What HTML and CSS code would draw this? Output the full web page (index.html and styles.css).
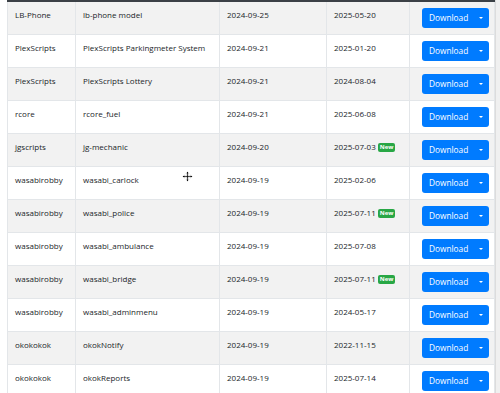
FILE: index.html
```html
<!DOCTYPE html>
<html>
<head>
<meta charset="utf-8">
<link rel="stylesheet" href="styles.css">
</head>
<body>
<div class="page">
  <div class="gutter"></div>
  <table class="list">
    <colgroup>
      <col class="c1"><col class="c2"><col class="c3"><col class="c4"><col class="c5">
    </colgroup>
    <tbody>
      <tr><td>LB-Phone</td><td>lb-phone model</td><td>2024-09-25</td><td>2025-05-20</td><td class="act"><div class="btn-group"><span class="btn-main">Download</span><span class="btn-toggle"><span class="caret"></span></span></div></td></tr>
      <tr><td>PlexScripts</td><td>PlexScripts Parkingmeter System</td><td>2024-09-21</td><td>2025-01-20</td><td class="act"><div class="btn-group"><span class="btn-main">Download</span><span class="btn-toggle"><span class="caret"></span></span></div></td></tr>
      <tr><td>PlexScripts</td><td>PlexScripts Lottery</td><td>2024-09-21</td><td>2024-08-04</td><td class="act"><div class="btn-group"><span class="btn-main">Download</span><span class="btn-toggle"><span class="caret"></span></span></div></td></tr>
      <tr><td>rcore</td><td>rcore_fuel</td><td>2024-09-21</td><td>2025-06-08</td><td class="act"><div class="btn-group"><span class="btn-main">Download</span><span class="btn-toggle"><span class="caret"></span></span></div></td></tr>
      <tr><td>jgscripts</td><td>jg-mechanic</td><td>2024-09-20</td><td>2025-07-03 <span class="badge">New</span></td><td class="act"><div class="btn-group"><span class="btn-main">Download</span><span class="btn-toggle"><span class="caret"></span></span></div></td></tr>
      <tr><td>wasabirobby</td><td>wasabi_carlock</td><td>2024-09-19</td><td>2025-02-06</td><td class="act"><div class="btn-group"><span class="btn-main">Download</span><span class="btn-toggle"><span class="caret"></span></span></div></td></tr>
      <tr><td>wasabirobby</td><td>wasabi_police</td><td>2024-09-19</td><td>2025-07-11 <span class="badge">New</span></td><td class="act"><div class="btn-group"><span class="btn-main">Download</span><span class="btn-toggle"><span class="caret"></span></span></div></td></tr>
      <tr><td>wasabirobby</td><td>wasabi_ambulance</td><td>2024-09-19</td><td>2025-07-08</td><td class="act"><div class="btn-group"><span class="btn-main">Download</span><span class="btn-toggle"><span class="caret"></span></span></div></td></tr>
      <tr><td>wasabirobby</td><td>wasabi_bridge</td><td>2024-09-19</td><td>2025-07-11 <span class="badge">New</span></td><td class="act"><div class="btn-group"><span class="btn-main">Download</span><span class="btn-toggle"><span class="caret"></span></span></div></td></tr>
      <tr><td>wasabirobby</td><td>wasabi_adminmenu</td><td>2024-09-19</td><td>2024-05-17</td><td class="act"><div class="btn-group"><span class="btn-main">Download</span><span class="btn-toggle"><span class="caret"></span></span></div></td></tr>
      <tr><td>okokokok</td><td>okokNotify</td><td>2024-09-19</td><td>2022-11-15</td><td class="act"><div class="btn-group"><span class="btn-main">Download</span><span class="btn-toggle"><span class="caret"></span></span></div></td></tr>
      <tr><td>okokokok</td><td>okokReports</td><td>2024-09-19</td><td>2025-07-14</td><td class="act"><div class="btn-group"><span class="btn-main">Download</span><span class="btn-toggle"><span class="caret"></span></span></div></td></tr>
    </tbody>
  </table>
  <div class="strip"></div>
</div>
<svg class="cursor" width="11" height="11" viewBox="0 0 11 11">
  <path d="M5.5 0.5 L7.5 2.5 L6.3 2.5 L6.3 4.7 L8.5 4.7 L8.5 3.5 L10.5 5.5 L8.5 7.5 L8.5 6.3 L6.3 6.3 L6.3 8.5 L7.5 8.5 L5.5 10.5 L3.5 8.5 L4.7 8.5 L4.7 6.3 L2.5 6.3 L2.5 7.5 L0.5 5.5 L2.5 3.5 L2.5 4.7 L4.7 4.7 L4.7 2.5 L3.5 2.5 Z" fill="#111" stroke="#fff" stroke-width="0.8"/>
</svg>
</body>
</html>
```
FILE: styles.css
```css
html, body {
  margin: 0;
  padding: 0;
  background: #fff;
}
body {
  font-family: "Open Sans", "Noto Sans", sans-serif;
  font-size: 8px;
  color: #212529;
  position: relative;
}
.page {
  display: flex;
  align-items: flex-start;
}
.gutter {
  width: 7px;
  flex: none;
}
.list {
  border-collapse: collapse;
  table-layout: fixed;
  width: 487px;
  flex: none;
  border-top: 2px solid #3b4046;
}
.c1 { width: 68px; }
.c2 { width: 144px; }
.c3 { width: 107px; }
.c4 { width: 83px; }
.c5 { width: 85px; }
.list td {
  border: 1px solid #e3e6e9;
  border-top: none;
  padding: 7px 7px 0 7px;
  line-height: 12px;
  height: 25px;
  vertical-align: top;
  white-space: nowrap;
}
.list tr:nth-child(odd) td {
  background: #f2f2f2;
}
.list td.act {
  padding: 6px 5px 6px 12px;
  height: 20px;
}
.btn-group {
  display: flex;
  width: 67px;
  height: 20px;
  background: #007bff;
  border-radius: 3px;
  color: #fff;
  align-items: center;
}
.btn-main {
  padding-left: 7px;
  flex: 1;
  line-height: 20px;
  font-size: 8.3px;
}
.btn-toggle {
  width: 17px;
  display: flex;
  justify-content: center;
  align-items: center;
  height: 20px;
}
.caret {
  width: 0;
  height: 0;
  border-top: 2.5px solid #fff;
  border-left: 2.5px solid transparent;
  border-right: 2.5px solid transparent;
}
.badge {
  display: inline-block;
  background: #28a745;
  color: #fff;
  font-weight: 700;
  font-size: 6px;
  line-height: 9px;
  height: 9px;
  padding: 0 2px;
  border-radius: 2px;
  vertical-align: 1px;
  margin-left: 0;
}
.strip {
  flex: 1;
  height: 393px;
  background: #f0f0f0;
  border-left: 1px solid #dcdcdc;
}
.cursor {
  position: absolute;
  left: 182px;
  top: 171px;
}
```
